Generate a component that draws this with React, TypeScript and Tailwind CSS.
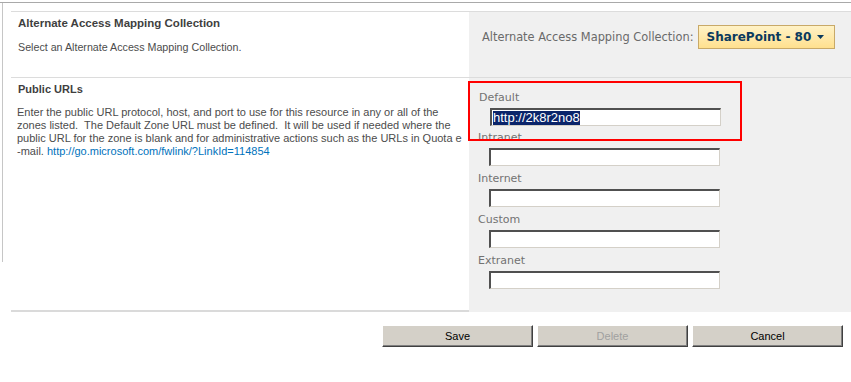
import React from "react";

const tahoma = "font-['Liberation_Sans',Arial,sans-serif]";
const verdana = "font-['DejaVu_Sans',Verdana,sans-serif]";

function UrlField({ label, value }: { label: string; value?: string }) {
    return (
        <div className="flex flex-col">
            <span className={`${verdana} text-[11px] leading-[14px] text-[#727272] pl-[9px]`}>{label}</span>
            <div className="ml-[20px] mt-[3px] w-[231px] h-[18px] bg-white border-t-2 border-l-2 border-t-[#505050] border-l-[#505050] border-b border-r border-b-[#d4d0c8] border-r-[#d4d0c8] flex items-center pl-[1px]">
                {value && (
                    <span className="font-['Liberation_Sans',Arial,sans-serif] text-[13px] leading-[14px] bg-[#0a246a] text-white">
                        {value}
                    </span>
                )}
            </div>
        </div>
    );
}

function ClassicButton({ children, disabled }: { children: React.ReactNode; disabled?: boolean }) {
    return (
        <button
            className={`${tahoma} w-[151px] h-[22px] bg-[#d4d0c8] text-[11px] border border-t-white border-l-white border-b-[#404040] border-r-[#404040] shadow-[inset_-1px_-1px_#808080] ${
                disabled ? "text-[#a0a0a0]" : "text-[#000]"
            }`}
        >
            {children}
        </button>
    );
}

export default function App() {
    return (
        <div className="w-[851px] h-[382px] bg-white overflow-hidden">
            <div className="mt-[2px] border-t border-[#a9a9a9]" />
            <div className="ml-[2px] h-[259px] border-l border-[#c6c6c6]">
                <div className="pt-[8px] pl-[8px]">
                    {/* collection section */}
                    <div className="flex border-t border-[#dcdcdc] h-[66px]">
                        <div className="w-[458px] pl-[7px] pt-[4px]">
                            <h3 className={`${tahoma} font-bold text-[11.5px] leading-[14px] text-[#3f3f3f]`}>
                                Alternate Access Mapping Collection
                            </h3>
                            <p className={`${tahoma} text-[10.7px] leading-[14px] text-[#4c4c4c] mt-[10px]`}>
                                Select an Alternate Access Mapping Collection.
                            </p>
                        </div>
                        <div className="flex-1 bg-[#f0f0f0] flex items-start pt-[13px] pl-[13px] gap-[4px]">
                            <span className={`${verdana} text-[11.4px] leading-[24px] text-[#6a6a6a]`}>
                                Alternate Access Mapping Collection:
                            </span>
                            <div className={`${verdana} h-[24px] pl-[8px] pr-[10px] flex items-center gap-[6px] bg-gradient-to-b from-[#fff2c6] to-[#ffe08e] border border-[#c8a968] font-bold text-[12px] text-[#0b3a5e]`}>
                                SharePoint - 80
                                <svg width="7" height="4" viewBox="0 0 7 4">
                                    <path d="M0 0h7L3.5 4z" fill="#0b3a5e" />
                                </svg>
                            </div>
                        </div>
                    </div>

                    {/* public urls section */}
                    <div className="flex border-t border-[#dcdcdc] h-[235px]">
                        <div className="w-[458px] pl-[6px] pt-[4px]">
                            <h3 className={`${tahoma} font-bold text-[11px] leading-[14px] text-[#3f3f3f] pl-[1px]`}>
                                Public URLs
                            </h3>
                            <p className={`${tahoma} text-[11px] leading-[13px] text-[#4c4c4c] mt-[10px] whitespace-nowrap`}>
                                Enter the public URL protocol, host, and port to use for this resource in any or all of the
                                <br />
                                zones listed.&nbsp; The Default Zone URL must be defined.&nbsp; It will be used if needed where the
                                <br />
                                public URL for the zone is blank and for administrative actions such as the URLs in Quota e
                                <br />
                                -mail. <span className="text-[#0072bc]">http://go.microsoft.com/fwlink/?LinkId=114854</span>
                            </p>
                        </div>
                        <div className="flex-1 bg-[#f0f0f0] pt-[3px]">
                            <div className="relative z-10 w-[274px] h-[60px] border-2 border-[#ff0000] pt-[8px] -ml-[1px]">
                                <UrlField label="Default" value="http://2k8r2no8" />
                            </div>
                            <div className="-mt-[10px] flex flex-col gap-[6px]">
                                <UrlField label="Intranet" />
                                <UrlField label="Internet" />
                                <UrlField label="Custom" />
                                <UrlField label="Extranet" />
                            </div>
                        </div>
                    </div>
                </div>
            </div>
            <div className="ml-[11px] mt-[48px] border-t-2 border-[#dadada]" />
            <div className="flex justify-end gap-[4px] pr-[8px] mt-[13px]">
                <ClassicButton>Save</ClassicButton>
                <ClassicButton disabled>Delete</ClassicButton>
                <ClassicButton>Cancel</ClassicButton>
            </div>
        </div>
    );
}
